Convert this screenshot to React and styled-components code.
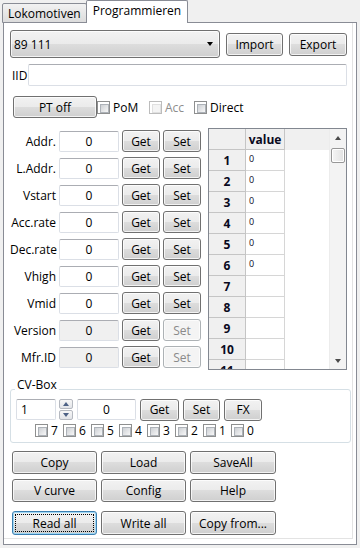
import React from "react";
import styled, { createGlobalStyle, css } from "styled-components";

const GlobalStyle = createGlobalStyle`
  * { box-sizing: border-box; }
  html, body { margin: 0; padding: 0; background: #f0f0f0; }
  body {
    font-family: "Open Sans", "Noto Sans", "Liberation Sans", sans-serif;
    font-size: 12px;
    color: #000;
  }
`;

const Window = styled.div`
  width: 360px;
  height: 548px;
  background: #f0f0f0;
  overflow: hidden;
`;

const TabBar = styled.div`
  display: flex;
  align-items: flex-end;
  height: 23px;
  margin-bottom: -1px;
  padding-left: 2px;
  position: relative;
  z-index: 2;
`;

const Tab = styled.div`
  height: 20px;
  padding: 0 5px;
  display: flex;
  align-items: center;
  border: 1px solid #898c95;
  border-radius: 2px 2px 0 0;
  background: linear-gradient(to bottom, #f2f2f2, #dcdcdc);
  ${(p) =>
    p.$active &&
    css`
      height: 23px;
      padding: 0 6px 3px;
      margin-left: -1px;
      border-bottom: none;
      background: #fff;
    `}
`;

const Panel = styled.div`
  margin: 0 3px 0 3px;
  height: 523px;
  border: 1px solid #898c95;
  background: #fff;
  padding: 0 3px 5px 0;
`;

const Inner = styled.div`
  height: 100%;
  border-right: 1px solid #e3e3e3;
  border-bottom: 1px solid #e3e3e3;
  padding: 7px 5px 0 6px;
  display: flex;
  flex-direction: column;
`;

const Row = styled.div`
  display: flex;
  align-items: center;
  flex: none;
  height: ${(p) => p.$h || 22}px;
  margin-top: ${(p) => p.$mt || 0}px;
  padding-left: ${(p) => p.$pl || 0}px;
  gap: ${(p) => p.$gap || 0}px;
`;

const Btn = styled.button`
  flex: none;
  width: ${(p) => p.$w}px;
  height: ${(p) => p.$h || 22}px;
  padding: 0;
  font: inherit;
  color: #000;
  border: 1px solid #707070;
  border-radius: 3px;
  background: linear-gradient(to bottom, #f2f2f2 0%, #ebebeb 49%, #dddddd 50%, #cfcfcf 100%);
  box-shadow: inset 0 0 0 1px rgba(255, 255, 255, 0.75);
  ${(p) =>
    p.disabled &&
    css`
      color: #8a8a8a;
      border-color: #adb2b5;
      background: #f4f4f4;
    `}
  ${(p) =>
    p.$focus &&
    css`
      border-color: #3c7fb1;
      box-shadow: inset 0 0 0 1px #9fd8f5;
      outline: 1px dotted #000;
      outline-offset: -4px;
    `}
`;

const Combo = styled.div`
  flex: none;
  width: 210px;
  height: 28px;
  border: 1px solid #707070;
  border-radius: 3px;
  background: linear-gradient(to bottom, #f2f2f2 0%, #ebebeb 49%, #dddddd 50%, #cfcfcf 100%);
  box-shadow: inset 0 0 0 1px rgba(255, 255, 255, 0.75);
  display: flex;
  align-items: center;
  padding: 0 6px 0 3px;
  justify-content: space-between;
`;

const DownTri = styled.span`
  width: 0;
  height: 0;
  border-left: 3.5px solid transparent;
  border-right: 3.5px solid transparent;
  border-top: 4px solid ${(p) => p.$c || "#000"};
`;

const UpTri = styled.span`
  width: 0;
  height: 0;
  border-left: 3.5px solid transparent;
  border-right: 3.5px solid transparent;
  border-bottom: 4px solid ${(p) => p.$c || "#000"};
`;

const Field = styled.div`
  flex: ${(p) => (p.$w ? "none" : 1)};
  width: ${(p) => (p.$w ? `${p.$w}px` : "auto")};
  height: ${(p) => p.$h || 21}px;
  border: 1px solid #dbdfe6;
  border-top-color: #abadb3;
  border-radius: 2px;
  background: ${(p) => (p.$off ? "#f0f0f0" : "#fff")};
  display: flex;
  align-items: center;
  justify-content: ${(p) => (p.$left ? "flex-start" : "center")};
  padding-left: ${(p) => (p.$left ? 4 : 0)}px;
`;

const Label = styled.span`
  flex: none;
  width: ${(p) => p.$w}px;
  text-align: ${(p) => p.$align || "left"};
  padding-left: ${(p) => p.$pl || 0}px;
  white-space: nowrap;
`;

const CheckItem = styled.label`
  flex: none;
  width: ${(p) => p.$w}px;
  display: flex;
  align-items: center;
  gap: 3px;
  color: ${(p) => (p.$off ? "#8d8d8d" : "#000")};
`;

const Box = styled.span`
  flex: none;
  width: 13px;
  height: 13px;
  border: 1px solid ${(p) => (p.$off ? "#bcbcbc" : "#8e8f8f")};
  background: #fff;
  padding: 2px;
  &::after {
    content: "";
    display: block;
    width: 100%;
    height: 100%;
    border: 1px solid ${(p) => (p.$off ? "#e0e0e0" : "#adb2b8")};
    background: ${(p) =>
      p.$off ? "#f4f4f4" : "linear-gradient(135deg, #cdd0d4, #f7f7f7)"};
  }
`;

const Main = styled.div`
  display: flex;
  gap: 7px;
  margin-top: 10px;
  flex: none;
`;

const Form = styled.div`
  padding-top: 2px;
  display: grid;
  row-gap: 5px;
  align-content: start;
`;

const FormRow = styled.div`
  display: grid;
  grid-template-columns: 46px 60px 38px 38px;
  column-gap: 3px;
  align-items: center;
  height: 22px;
`;

const Table = styled.div`
  flex: none;
  width: 139px;
  height: 242px;
  border: 1px solid #828790;
  display: flex;
`;

const Grid = styled.div`
  flex: 1;
  overflow: hidden;
  background: #fff;
`;

const GRow = styled.div`
  display: flex;
  height: 21px;
  background: ${(p) => (p.$head ? "#f0f0f0" : "#fff")};
`;

const HeadCell = styled.div`
  flex: none;
  width: ${(p) => p.$w}px;
  height: 21px;
  background: #f0f0f0;
  border-right: 1px solid #c5c5c5;
  border-bottom: 1px solid #c5c5c5;
  display: flex;
  align-items: center;
  justify-content: center;
  font-weight: 700;
  color: #0a0a1e;
`;

const Cell = styled.div`
  flex: none;
  width: 39px;
  height: 21px;
  border-right: 1px solid #d6d6d6;
  border-bottom: 1px solid #d6d6d6;
  font-size: 9px;
  line-height: 1;
  padding: 4px 0 0 3px;
  color: #0a0a1e;
`;

const Scroll = styled.div`
  flex: none;
  width: 17px;
  background: #f3f3f3;
  border-left: 1px solid #ececec;
  display: flex;
  flex-direction: column;
`;

const ScrollArrow = styled.div`
  flex: none;
  height: 17px;
  display: flex;
  align-items: center;
  justify-content: center;
`;

const Track = styled.div`
  flex: 1;
  padding: 2px 1px 0 1px;
`;

const Thumb = styled.div`
  height: 15px;
  border: 1px solid #979797;
  border-radius: 2px;
  background: linear-gradient(to right, #f5f5f5, #e2e2e2);
  box-shadow: inset 0 0 0 1px #fff;
`;

const Group = styled.div`
  position: relative;
  flex: none;
  width: 341px;
  height: 54px;
  margin-top: 19px;
  border: 1px solid #d5dfe5;
  border-radius: 3px;
  padding: 9px 0 0 5px;
`;

const Legend = styled.span`
  position: absolute;
  left: 4px;
  top: -14px;
  padding: 0 2px;
  background: #fff;
  line-height: 18px;
`;

const Spin = styled.div`
  flex: none;
  width: 14px;
  height: 21px;
  display: flex;
  flex-direction: column;
  gap: 1px;
`;

const SpinBtn = styled.div`
  flex: 1;
  border: 1px solid #b5b9c0;
  border-radius: 2px;
  background: linear-gradient(to bottom, #f7f7f7, #e2e4e8);
  display: flex;
  align-items: center;
  justify-content: center;
`;

const Bits = styled.div`
  display: flex;
  margin-top: 4px;
  padding-left: 19px;
  height: 13px;
`;

const ButtonGrid = styled.div`
  display: grid;
  grid-template-columns: 85px 85px 86px;
  grid-template-rows: 23px 23px 24px;
  column-gap: 4px;
  row-gap: 5px;
  margin-top: 8px;
  padding-left: 2px;
  & > :nth-child(n + 7) {
    margin-top: 4px;
  }
`;

const Check = ({ label, w, off }) => (
  <CheckItem $w={w} $off={off}>
    <Box $off={off} />
    {label}
  </CheckItem>
);

const params = [
  ["Addr."],
  ["L.Addr."],
  ["Vstart"],
  ["Acc.rate"],
  ["Dec.rate"],
  ["Vhigh"],
  ["Vmid"],
  ["Version", true],
  ["Mfr.ID", true],
];

const rows = [1, 2, 3, 4, 5, 6, 7, 8, 9, 10, 11];

export default function App() {
  return (
    <Window>
      <GlobalStyle />
      <TabBar>
        <Tab>Lokomotiven</Tab>
        <Tab $active>Programmieren</Tab>
      </TabBar>
      <Panel>
        <Inner>
          <Row $h={28} $gap={6}>
            <Combo>
              <span>89 111</span>
              <DownTri />
            </Combo>
            <Btn $w={57} $h={23}>Import</Btn>
            <Btn $w={58} $h={23}>Export</Btn>
          </Row>

          <Row $mt={6}>
            <Label $w={18} $pl={2}>IID</Label>
            <Field $h={22} $left />
          </Row>

          <Row $mt={10} $pl={3}>
            <Btn $w={84}>PT off</Btn>
            <Check label="PoM" w={52} />
            <Check label="Acc" w={45} off />
            <Check label="Direct" w={60} />
          </Row>

          <Main>
            <Form>
              {params.map(([name, ro]) => (
                <FormRow key={name}>
                  <Label $align="right">{name}</Label>
                  <Field $off={ro}>0</Field>
                  <Btn $w={38}>Get</Btn>
                  <Btn $w={38} disabled={ro}>Set</Btn>
                </FormRow>
              ))}
            </Form>

            <Table>
              <Grid>
                <GRow $head>
                  <HeadCell $w={37} />
                  <HeadCell $w={39}>value</HeadCell>
                </GRow>
                {rows.map((n) => (
                  <GRow key={n}>
                    <HeadCell $w={37}>{n}</HeadCell>
                    <Cell>{n <= 6 ? "0" : ""}</Cell>
                  </GRow>
                ))}
              </Grid>
              <Scroll>
                <ScrollArrow>
                  <UpTri $c="#4a4a4a" />
                </ScrollArrow>
                <Track>
                  <Thumb />
                </Track>
                <ScrollArrow>
                  <DownTri $c="#4a4a4a" />
                </ScrollArrow>
              </Scroll>
            </Table>
          </Main>

          <Group>
            <Legend>CV-Box</Legend>
            <Row $h={21}>
              <Field $w={40} $left>1</Field>
              <Row $h={21} $pl={3}>
                <Spin>
                  <SpinBtn>
                    <UpTri $c="#4d6185" />
                  </SpinBtn>
                  <SpinBtn>
                    <DownTri $c="#4d6185" />
                  </SpinBtn>
                </Spin>
              </Row>
              <Row $h={21} $pl={4} $gap={4}>
                <Field $w={59}>0</Field>
                <Btn $w={39}>Get</Btn>
                <Btn $w={37}>Set</Btn>
                <Btn $w={38}>FX</Btn>
              </Row>
            </Row>
            <Bits>
              {[7, 6, 5, 4, 3, 2, 1, 0].map((b) => (
                <Check key={b} label={b} w={28} />
              ))}
            </Bits>
          </Group>

          <ButtonGrid>
            <Btn $w={85} $h={23}>Copy</Btn>
            <Btn $w={85} $h={23}>Load</Btn>
            <Btn $w={86} $h={23}>SaveAll</Btn>
            <Btn $w={85} $h={23}>V curve</Btn>
            <Btn $w={85} $h={23}>Config</Btn>
            <Btn $w={86} $h={23}>Help</Btn>
            <Btn $w={85} $h={24} $focus>Read all</Btn>
            <Btn $w={85} $h={24}>Write all</Btn>
            <Btn $w={86} $h={24}>Copy from...</Btn>
          </ButtonGrid>
        </Inner>
      </Panel>
    </Window>
  );
}
